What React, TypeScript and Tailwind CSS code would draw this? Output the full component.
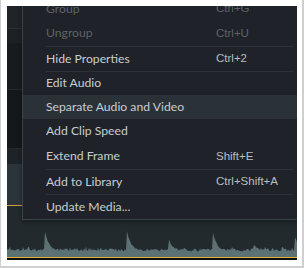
const items = [
  { label: "Group", key: "Ctrl+G", h: "h-[24px]", off: true },
  { label: "Ungroup", key: "Ctrl+U", h: "h-[25px]", off: true },
  { label: "Hide Properties", key: "Ctrl+2", h: "h-[25px]", sep: true },
  { label: "Edit Audio", key: "", h: "h-[24px]", sep: true },
  { label: "Separate Audio and Video", key: "", h: "h-[24px]", active: true },
  { label: "Add Clip Speed", key: "", h: "h-[25px]" },
  { label: "Extend Frame", key: "Shift+E", h: "h-[25px]" },
  { label: "Add to Library", key: "Ctrl+Shift+A", h: "h-[25px]", sep: true },
  { label: "Update Media...", key: "", h: "h-[25px]", sep: true },
];

// spikes: x, peak y
const spikes = [
  [38, 25],
  [120, 24],
  [162, 33],
  [206, 26],
  [247, 38],
  [288, 30],
];

function wavePath() {
  let seed = 7;
  const rnd = () => {
    seed = (seed * 9301 + 49297) % 233280;
    return seed / 233280;
  };
  const pts: string[] = [];
  for (let x = 0; x <= 290; x++) {
    let y = 44 + rnd() * 3 - 1.5;
    if (rnd() > 0.85) y -= 2;
    for (const [sx, py] of spikes) {
      if (x >= sx) {
        const d = x - sx;
        const s = 44 - (44 - py) * Math.exp(-d / 4);
        if (s < y) y = s + rnd() * 1.5;
      }
    }
    pts.push(`${x},${y.toFixed(1)}`);
  }
  return `M0,51 L${pts.join(" L")} L290,51 Z`;
}

function MenuRow({ item }: { item: (typeof items)[number] }) {
  return (
    <div className={`${item.h} pl-[23px] pr-[4px] ${item.active ? "bg-[#2a3238]" : ""}`}>
      <div
        className={`h-full flex items-center ${item.sep ? "border-t border-[#2b3135]" : ""} ${
          item.off ? "text-[#5c6267]" : "text-[#c8cdd0]"
        }`}
      >
        <span className="w-[170px] shrink-0 whitespace-nowrap">{item.label}</span>
        <span className={`whitespace-nowrap font-['Liberation_Sans',sans-serif] text-[11.5px] ${item.off ? "" : "text-[#b8bdc1]"}`}>
          {item.key}
        </span>
      </div>
    </div>
  );
}

export default function App() {
  return (
    <div className="w-[304px] h-[268px] bg-white border-l border-r-2 border-b-2 border-[#cfcfcf] pl-[6px] pt-[6px] pr-[5px] pb-[6px]">
      <div className="relative w-[290px] h-[254px] overflow-hidden flex flex-col bg-[#1d2125]">
        <div className="h-[23px] shrink-0 bg-[#202428] border-b border-[#2b3034]" />
        <div className="h-[14px] shrink-0 bg-[#1d2125]" />
        <div className="h-[47px] shrink-0 bg-[#181b1e] border-b border-[#24292c]" />
        <div className="h-[59px] shrink-0 bg-[#15181a] border-b border-[#24292c]" />
        <div className="h-[15px] shrink-0 bg-[#1e2327]" />
        <div className="h-[42px] shrink-0 bg-[#2b343a] border-b border-[#c9a23c]" />
        <div className="flex-1 bg-[#222a2e] flex items-end">
          <svg width="290" height="51" viewBox="0 0 290 51" className="block">
            <path d={wavePath()} fill="#5c7171" />
          </svg>
        </div>
        <div className="h-[3px] shrink-0 bg-[#0d0e0e] border-t border-[#e3b23a]" />

        <div className="absolute left-[15px] top-[-9px] right-0 h-[223px] bg-[#1f2329] border-l border-b border-[#384446] font-['Lato',sans-serif] text-[12.2px] shadow-[0_2px_4px_rgba(0,0,0,0.35)]">
          {items.map((it) => (
            <MenuRow key={it.label} item={it} />
          ))}
        </div>
      </div>
    </div>
  );
}
